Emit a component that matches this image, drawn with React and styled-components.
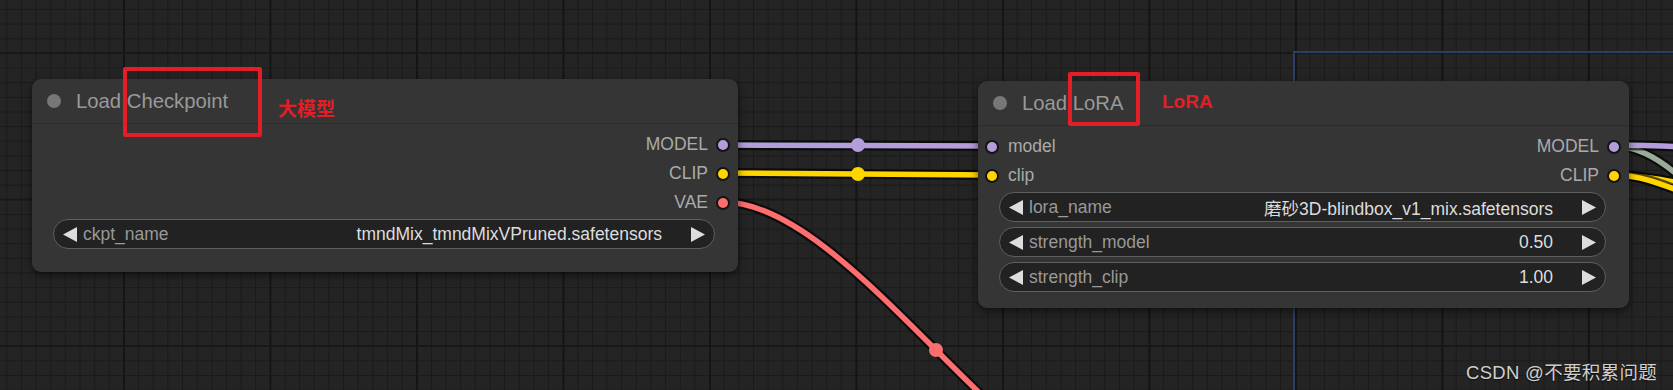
import React from 'react'
import styled, { createGlobalStyle } from 'styled-components'

const GlobalStyle = createGlobalStyle`
  html, body { margin: 0; padding: 0; background: #232323; }
  body { overflow: hidden; }
`

const Canvas = styled.div`
  position: relative;
  width: 1673px;
  height: 390px;
  overflow: hidden;
  background-color: #242424;
  background-image:
    linear-gradient(to right, #151515 0 2px, transparent 2px),
    linear-gradient(to bottom, #181818 0 2px, transparent 2px),
    linear-gradient(to right, #1a1a1a 0 1px, transparent 1px),
    linear-gradient(to bottom, #1a1a1a 0 1px, transparent 1px);
  background-size: 146.5px 100%, 100% 146.5px, 14.65px 100%, 100% 14.65px;
  background-position: 123px 0, 0 52px, 6.3px 0, 0 9px;
  font-family: "Liberation Sans", Arial, "Noto Sans CJK SC", sans-serif;
`

const Group = styled.div`
  position: absolute;
  left: 1293px;
  top: 51px;
  right: -10px;
  bottom: -10px;
  border-top: 2px solid #2b3f66;
  border-left: 2px solid #2b3f66;
`

const Links = styled.svg`
  position: absolute;
  left: 0;
  top: 0;
  width: 1673px;
  height: 390px;
`

const Node = styled.div`
  position: absolute;
  left: ${p => p.$x}px;
  top: ${p => p.$y}px;
  width: ${p => p.$w}px;
  height: ${p => p.$h}px;
  background: #353535;
  border-radius: 9px;
  box-shadow: 0 3px 8px rgba(0, 0, 0, 0.55);
  display: flex;
  flex-direction: column;
`

const Title = styled.div`
  height: 44px;
  border-bottom: 1px solid #2c2c2c;
  display: flex;
  align-items: center;
  gap: 15px;
  padding-left: 15px;
  font-size: 20.3px;
  color: #999;
`

const TitleDot = styled.span`
  width: 14px;
  height: 14px;
  border-radius: 50%;
  background: #777;
`

const Body = styled.div`
  display: flex;
  flex-direction: column;
  padding-top: 6px;
`

const SlotRow = styled.div`
  height: 29px;
  display: flex;
  align-items: center;
  justify-content: space-between;
  padding: 0 8px 0 7px;
`

const Slot = styled.div`
  display: flex;
  align-items: center;
  gap: ${p => (p.$out ? 8 : 9)}px;
  font-size: 17.5px;
  color: #aaa;
  margin-left: ${p => (p.$out ? 'auto' : '0')};
`

const Dot = styled.span`
  box-sizing: border-box;
  width: 14px;
  height: 14px;
  border-radius: 50%;
  border: 2px solid #141414;
  background: ${p => p.$color};
`

const Widgets = styled.div`
  display: flex;
  flex-direction: column;
  gap: 5px;
  margin: 2px 23px 0 21px;
`

const Widget = styled.div`
  box-sizing: border-box;
  height: 30px;
  border: 1px solid #5f5f5f;
  border-radius: 15px;
  background: #222;
  display: flex;
  align-items: center;
  padding: 0 9px 0 9px;
  font-size: 17.5px;
`

const Label = styled.span`
  color: #999;
  margin-left: 6px;
`

const Value = styled.span`
  color: #ddd;
  margin-left: auto;
  margin-right: 29px;
`

const Arrow = ({ dir }) => (
  <svg width="14" height="15" viewBox="0 0 14 15">
    <polygon points={dir === 'left' ? '14,0 14,15 0,7.5' : '0,0 0,15 14,7.5'} fill="#ddd" />
  </svg>
)

const Mark = styled.div`
  position: absolute;
  left: ${p => p.$x}px;
  top: ${p => p.$y}px;
  width: ${p => p.$w}px;
  height: ${p => p.$h}px;
  box-sizing: border-box;
  border: 4px solid #e41e26;
  border-radius: 2px;
`

const Note = styled.div`
  position: absolute;
  left: ${p => p.$x}px;
  top: ${p => p.$y}px;
  font-size: 19px;
  font-weight: bold;
  color: #e41e26;
  font-family: "Liberation Sans", "Noto Sans CJK SC", sans-serif;
`

const Watermark = styled.div`
  position: absolute;
  right: 16px;
  top: 358px;
  font-size: 18.5px;
  letter-spacing: 0.3px;
  color: #cfcfcf;
  font-family: "Liberation Sans", "Noto Sans CJK SC", sans-serif;
  text-shadow: 0 1px 1px rgba(0, 0, 0, 0.6);
`

const COLORS = { MODEL: '#b39ddb', CLIP: '#ffd500', VAE: '#ff6e6e', OTHER: '#9aab98' }

const Link = ({ d, color }) => (
  <g fill="none">
    <path d={d} stroke="rgba(0,0,0,0.65)" strokeWidth="10" />
    <path d={d} stroke={color} strokeWidth="5.5" />
  </g>
)

const links = [
  { d: 'M723,145 C790,145 925,146 992,146', color: COLORS.MODEL },
  { d: 'M723,173 C790,173 925,175 992,175', color: COLORS.CLIP },
  { d: 'M723,202 C853,202 1019,498 1149,498', color: COLORS.VAE },
  { d: 'M1614,146 C1650,146 1680,175 1720,215', color: COLORS.OTHER },
  { d: 'M1614,145 C1650,145 1700,148 1760,149', color: COLORS.MODEL },
  { d: 'M1614,175 C1650,175 1690,186 1760,198', color: COLORS.CLIP },
  { d: 'M1614,175 C1645,175 1670,188 1730,210', color: COLORS.CLIP },
]

const midDots = [
  { x: 858, y: 145, color: COLORS.MODEL },
  { x: 858, y: 174, color: COLORS.CLIP },
  { x: 936, y: 350, color: COLORS.VAE },
]

const App = () => (
  <>
    <GlobalStyle />
    <Canvas>
      <Group />
      <Links>
        {links.map((l, i) => <Link key={i} {...l} />)}
        {midDots.map((m, i) => (
          <circle key={i} cx={m.x} cy={m.y} r="7" fill={m.color} />
        ))}
      </Links>

      <Node $x={32} $y={79} $w={706} $h={193}>
        <Title><TitleDot />Load Checkpoint</Title>
        <Body>
          <SlotRow><Slot $out>MODEL<Dot $color={COLORS.MODEL} /></Slot></SlotRow>
          <SlotRow><Slot $out>CLIP<Dot $color={COLORS.CLIP} /></Slot></SlotRow>
          <SlotRow><Slot $out>VAE<Dot $color={COLORS.VAE} /></Slot></SlotRow>
          <Widgets>
            <Widget>
              <Arrow dir="left" /><Label>ckpt_name</Label>
              <Value>tmndMix_tmndMixVPruned.safetensors</Value><Arrow dir="right" />
            </Widget>
          </Widgets>
        </Body>
      </Node>

      <Node $x={978} $y={81} $w={651} $h={227}>
        <Title><TitleDot />Load LoRA</Title>
        <Body>
          <SlotRow>
            <Slot><Dot $color={COLORS.MODEL} />model</Slot>
            <Slot $out>MODEL<Dot $color={COLORS.MODEL} /></Slot>
          </SlotRow>
          <SlotRow>
            <Slot><Dot $color={COLORS.CLIP} />clip</Slot>
            <Slot $out>CLIP<Dot $color={COLORS.CLIP} /></Slot>
          </SlotRow>
          <Widgets>
            <Widget>
              <Arrow dir="left" /><Label>lora_name</Label>
              <Value>磨砂3D-blindbox_v1_mix.safetensors</Value><Arrow dir="right" />
            </Widget>
            <Widget>
              <Arrow dir="left" /><Label>strength_model</Label>
              <Value>0.50</Value><Arrow dir="right" />
            </Widget>
            <Widget>
              <Arrow dir="left" /><Label>strength_clip</Label>
              <Value>1.00</Value><Arrow dir="right" />
            </Widget>
          </Widgets>
        </Body>
      </Node>

      <Mark $x={123} $y={67} $w={139} $h={70} />
      <Note $x={278} $y={94}>大模型</Note>
      <Mark $x={1068} $y={72} $w={72} $h={54} />
      <Note $x={1162} $y={91}>LoRA</Note>

      <Watermark>CSDN @不要积累问题</Watermark>
    </Canvas>
  </>
)

export default App
